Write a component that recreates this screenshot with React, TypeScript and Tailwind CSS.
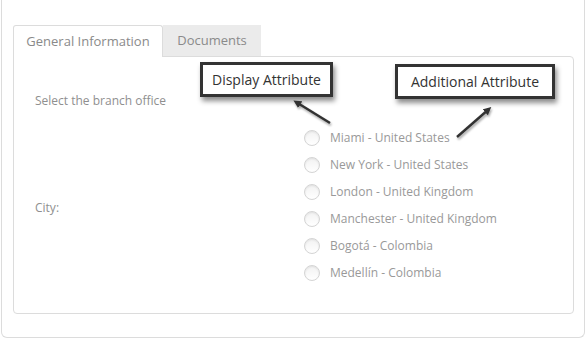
import React from "react";

const CITIES = [
  "Miami - United States",
  "New York - United States",
  "London - United Kingdom",
  "Manchester - United Kingdom",
  "Bogotá - Colombia",
  "Medellín - Colombia",
];

function Radio() {
  return (
    <span className="inline-block w-[16px] h-[16px] rounded-full border border-[#d4d4d4] bg-gradient-to-b from-[#f2f2f2] to-[#ffffff] shadow-[inset_0_1px_2px_rgba(0,0,0,0.08)]" />
  );
}

function Callout({ text, className }: { text: string; className: string }) {
  return (
    <div
      className={`absolute bg-white border-[3px] border-[#333] text-[#333] text-[14px] leading-none flex items-center justify-center shadow-[2px_4px_5px_rgba(0,0,0,0.45)] ${className}`}
    >
      {text}
    </div>
  );
}

export default function App() {
  return (
    <div
      className="relative w-[587px] h-[340px] bg-white overflow-hidden"
      style={{ fontFamily: '"Open Sans", "Liberation Sans", sans-serif' }}
    >
      {/* outer card, top edge sits above the viewport */}
      <div className="ml-px w-[584px] h-[338px] border-x border-b border-[#dcdcdc] rounded-b-[6px] px-[11px] pt-[25px]">
        {/* tabs */}
        <div className="flex h-[31px]">
          <div className="w-[150px] h-[32px] bg-white border border-[#dcdcdc] border-b-0 rounded-t-[3px] flex items-center justify-center text-[13px] text-[#8a8a8a] relative z-10">
            General Information
          </div>
          <div className="w-[98px] h-[31px] bg-[#ebebeb] flex items-center justify-center text-[13px] text-[#8a8a8a]">
            Documents
          </div>
        </div>

        {/* panel */}
        <div className="w-[561px] h-[258px] border border-[#dcdcdc] rounded-b-[4px] rounded-tr-[4px] pl-[21px] pt-[36px] text-[12px] text-[#8f8f8f]">
          <div className="h-[16px] leading-[16px]">Select the branch office</div>
          <div className="flex items-center mt-[15px]">
            <div className="w-[269px] pt-[6px]">City:</div>
            <div className="flex flex-col">
              {CITIES.map((c) => (
                <div key={c} className="h-[27px] flex items-center gap-[10px]">
                  <Radio />
                  <span className="text-[#999]">{c}</span>
                </div>
              ))}
            </div>
          </div>
        </div>
      </div>

      {/* annotations */}
      <Callout text="Display Attribute" className="left-[200px] top-[62px] w-[133px] h-[35px]" />
      <Callout text="Additional Attribute" className="left-[395px] top-[64px] w-[160px] h-[35px]" />
      <svg className="absolute left-0 top-0 pointer-events-none" width="587" height="340">
        <defs>
          <marker id="ah" markerWidth="8" markerHeight="8" refX="5" refY="4" orient="auto" markerUnits="userSpaceOnUse">
            <path d="M0,0 L8,4 L0,8 Z" fill="#333" />
          </marker>
          <filter id="sh" x="-20%" y="-20%" width="140%" height="140%">
            <feDropShadow dx="1" dy="2" stdDeviation="1.2" floodColor="#000" floodOpacity="0.35" />
          </filter>
        </defs>
        <g filter="url(#sh)">
          <line x1="330" y1="123" x2="296" y2="102" stroke="#333" strokeWidth="2.5" markerEnd="url(#ah)" />
          <line x1="457" y1="137" x2="489" y2="109" stroke="#333" strokeWidth="2.5" markerEnd="url(#ah)" />
        </g>
      </svg>
    </div>
  );
}
